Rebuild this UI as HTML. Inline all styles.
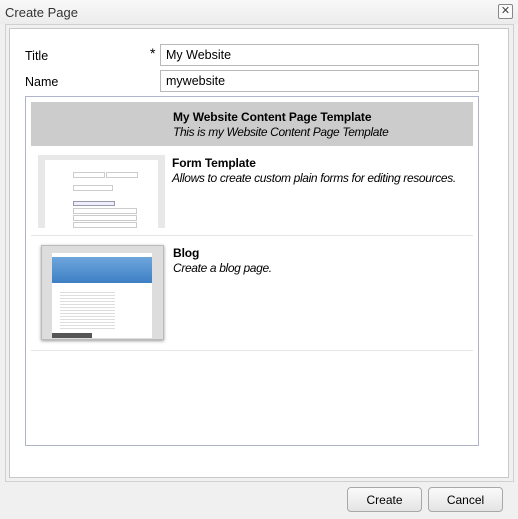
<!DOCTYPE html>
<html><head><style>
body{margin:0;width:518px;height:519px;background:#f0f0f0;font-family:"Liberation Sans",Arial,sans-serif;font-size:12px;position:relative;overflow:hidden;color:#000}
.a{position:absolute;white-space:nowrap}
.inp{position:absolute;left:160px;width:312px;height:20px;border:1px solid #b8b8b8;background:#fff;font-size:12.5px;line-height:21px;padding-left:5px;box-sizing:content-box}
.btn{position:absolute;top:487px;height:23px;width:73px;border:1px solid #a8a8a8;border-radius:4px;background:linear-gradient(#fafafa,#e4e4e4);text-align:center;line-height:24px;font-size:12px}
.sep{position:absolute;left:31px;width:442px;height:1px;background:#e6e6e6}
.b{font-weight:bold;font-size:12px;letter-spacing:-0.1px}
.i{font-style:italic;font-size:12px;letter-spacing:-0.35px}
</style></head><body>
<div class="a" style="left:0;top:0;width:518px;height:24px;background:linear-gradient(#f8f8f8,#ececec)"></div>
<div class="a" style="left:5px;top:5px;font-size:13px;color:#333">Create Page</div>
<div class="a" style="left:498px;top:4px;width:13px;height:13px;border:1px solid #888;border-radius:2px;background:#fafafa;font-size:11px;line-height:13px;text-align:center;color:#444">✕</div>
<div class="a" style="left:5px;top:24px;width:507px;height:456px;border:1px solid #d0d0d0;background:#f0f0f0"></div>
<div class="a" style="left:9px;top:28px;width:498px;height:448px;border:1px solid #c8c8c8;background:#fff"></div>
<div class="a" style="left:25px;top:49px;font-size:12.5px">Title</div>
<div class="a" style="left:150px;top:45px;font-size:14px">*</div>
<div class="inp" style="top:44px">My Website</div>
<div class="a" style="left:25px;top:75px;font-size:12.5px">Name</div>
<div class="inp" style="top:70px">mywebsite</div>
<div class="a" style="left:25px;top:96px;width:452px;height:348px;border:1px solid #b0b4c8;background:#fff"></div>
<div class="a" style="left:31px;top:102px;width:442px;height:44px;background:#cccccc"></div>
<div class="a b" style="left:173px;top:110px">My Website Content Page Template</div>
<div class="a i" style="left:173px;top:125px">This is my Website Content Page Template</div>
<div class="a" style="left:38px;top:155px;width:127px;height:73px;background:#e8e8e8"></div>
<div class="a" style="left:45px;top:160px;width:113px;height:68px;background:#fff"></div>
<div class="a" style="left:73px;top:172px;width:30px;height:4px;border:1px solid #ccc"></div>
<div class="a" style="left:106px;top:172px;width:30px;height:4px;border:1px solid #ccc"></div>
<div class="a" style="left:73px;top:185px;width:38px;height:4px;border:1px solid #ccc"></div>
<div class="a" style="left:73px;top:201px;width:40px;height:3px;border:1px solid #99a;background:#eef"></div>
<div class="a" style="left:73px;top:208px;width:62px;height:4px;border:1px solid #ccc"></div>
<div class="a" style="left:73px;top:215px;width:62px;height:4px;border:1px solid #ccc"></div>
<div class="a" style="left:73px;top:222px;width:62px;height:4px;border:1px solid #ccc"></div>
<div class="a b" style="left:172px;top:156px">Form Template</div>
<div class="a i" style="left:172px;top:171px">Allows to create custom plain forms for editing resources.</div>
<div class="sep" style="top:235px"></div>
<div class="a" style="left:41px;top:245px;width:121px;height:93px;background:#ddd;border:1px solid #bbb;box-shadow:0 1px 3px #999"></div>
<div class="a" style="left:52px;top:253px;width:100px;height:85px;background:#fff"></div>
<div class="a" style="left:52px;top:257px;width:100px;height:26px;background:linear-gradient(#6ea6dc,#3d7fc4)"></div>
<div class="a" style="left:60px;top:290px;width:55px;height:40px;background:repeating-linear-gradient(#fff 0 2px,#ddd 2px 3px)"></div>
<div class="a" style="left:52px;top:333px;width:40px;height:5px;background:#555"></div>
<div class="a b" style="left:173px;top:246px">Blog</div>
<div class="a i" style="left:173px;top:261px">Create a blog page.</div>
<div class="sep" style="top:350px"></div>
<div class="btn" style="left:347px">Create</div>
<div class="btn" style="left:428px">Cancel</div>
</body></html>
